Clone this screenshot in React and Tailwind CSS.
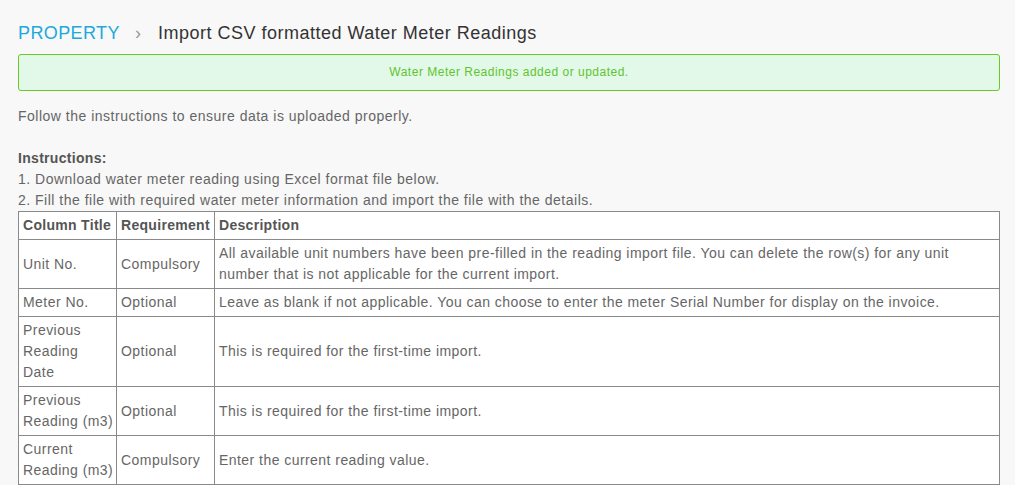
const rows = [
    {
        title: "Unit No.",
        req: "Compulsory",
        desc: "All available unit numbers have been pre-filled in the reading import file. You can delete the row(s) for any unit number that is not applicable for the current import.",
    },
    {
        title: "Meter No.",
        req: "Optional",
        desc: "Leave as blank if not applicable. You can choose to enter the meter Serial Number for display on the invoice.",
    },
    {
        title: (
            <>
                Previous
                <br />
                Reading
                <br />
                Date
            </>
        ),
        req: "Optional",
        desc: "This is required for the first-time import.",
    },
    { title: "Previous Reading (m3)", req: "Optional", desc: "This is required for the first-time import." },
    { title: "Current Reading (m3)", req: "Compulsory", desc: "Enter the current reading value." },
];

function Cell({ children, bold = false }) {
    return (
        <td
            className={`border border-[#8a8a8a] pl-[4px] pr-[2px] py-[3px] align-middle ${
                bold ? "font-bold text-[#555] tracking-[0.3px]" : ""
            }`}
        >
            {children}
        </td>
    );
}

export default function App() {
    return (
        <div className="min-h-[485px] bg-[#f8f8f8] pl-[18px] pr-[15px] pt-[21px] font-['Liberation_Sans',Arial,sans-serif] text-[14px] leading-[21px] tracking-[0.5px] text-[#666]">
            <div className="flex items-center h-[24px] text-[18px]">
                <span className="text-[#1da9dc] tracking-[0.4px]">PROPERTY</span>
                <span className="text-[#999] ml-[15px] mr-[17px] tracking-normal">›</span>
                <span className="text-[#333]">Import CSV formatted Water Meter Readings</span>
            </div>

            <div className="mt-[9px] h-[37px] flex items-center justify-center rounded-[3px] border border-[#66cc22] bg-[#e2f9e9] text-[12px] text-[#60c42c]">
                Water Meter Readings added or updated.
            </div>

            <p className="mt-[15px]">Follow the instructions to ensure data is uploaded properly.</p>

            <div className="mt-[21px] font-bold text-[#555] tracking-[0.3px]">Instructions:</div>
            <div>1. Download water meter reading using Excel format file below.</div>
            <div>2. Fill the file with required water meter information and import the file with the details.</div>

            <table className="w-full table-fixed border-collapse bg-white">
                <colgroup>
                    <col className="w-[98px]" />
                    <col className="w-[98px]" />
                    <col />
                </colgroup>
                <tbody className="tracking-[0.45px]">
                    <tr>
                        <Cell bold>Column Title</Cell>
                        <Cell bold>Requirement</Cell>
                        <Cell bold>Description</Cell>
                    </tr>
                    {rows.map((r, i) => (
                        <tr key={i}>
                            <Cell>{r.title}</Cell>
                            <Cell>{r.req}</Cell>
                            <Cell>{r.desc}</Cell>
                        </tr>
                    ))}
                </tbody>
            </table>
        </div>
    );
}
